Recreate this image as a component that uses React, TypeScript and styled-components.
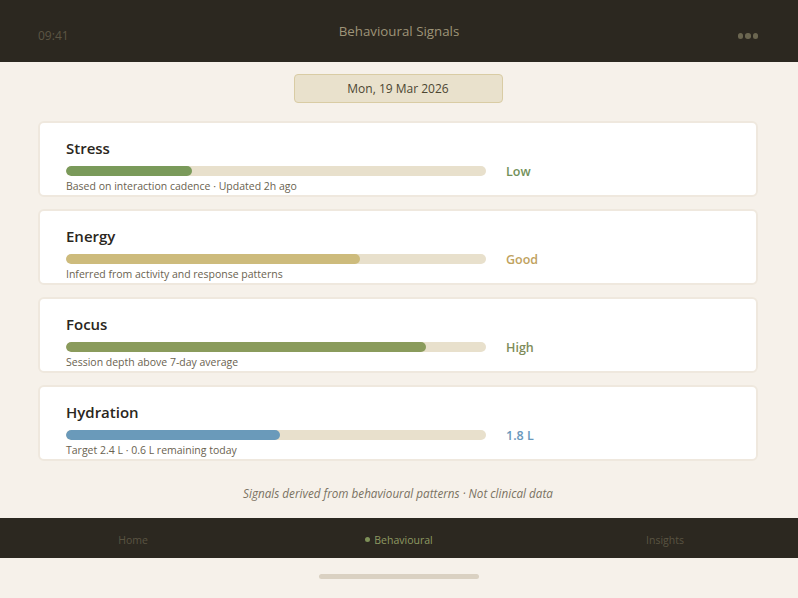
import React from "react";
import styled, { createGlobalStyle } from "styled-components";

const GlobalStyle = createGlobalStyle`
  html, body {
    margin: 0;
    padding: 0;
    background: #f6f1ea;
  }
  body {
    font-family: "Open Sans", "Noto Sans", "Liberation Sans", sans-serif;
  }
`;

const Screen = styled.div`
  width: 798px;
  height: 598px;
  display: flex;
  flex-direction: column;
  background: #f6f1ea;
`;

const TopBar = styled.div`
  height: 62px;
  background: #2c2820;
  display: grid;
  grid-template-columns: 1fr auto 1fr;
  align-items: center;
  padding: 0 38px;
  box-sizing: border-box;
`;

const Clock = styled.span`
  font-size: 12px;
  color: #5c5644;
  padding-top: 8px;
`;

const Title = styled.span`
  font-size: 13.3px;
  color: #9e9478;
`;

const MoreDots = styled.div`
  justify-self: end;
  display: flex;
  gap: 2px;
  padding-top: 10px;
  margin-right: 2px;
`;

const Dot = styled.span<{ $size?: number; $color?: string }>`
  width: ${(p) => p.$size ?? 6}px;
  height: ${(p) => p.$size ?? 6}px;
  border-radius: 50%;
  background: ${(p) => p.$color ?? "#6b6650"};
  display: inline-block;
`;

const Body = styled.main`
  flex: 1;
  display: flex;
  flex-direction: column;
  align-items: center;
  padding: 11px 40px 0 38px;
`;

const DatePill = styled.div`
  width: 209px;
  height: 29px;
  margin-top: 1px;
  box-sizing: border-box;
  background: #e9e1cc;
  border: 1px solid #d9cca4;
  border-radius: 4px;
  display: flex;
  align-items: center;
  justify-content: center;
  font-size: 12px;
  color: #4c4632;
`;

const CardList = styled.div`
  align-self: stretch;
  display: flex;
  flex-direction: column;
  gap: 12px;
  margin-top: 18px;
`;

const Card = styled.section`
  height: 76px;
  box-sizing: border-box;
  background: #ffffff;
  border: 2px solid #efe8de;
  border-radius: 6px;
  padding: 14px 26px 0;
`;

const CardTitle = styled.h3`
  margin: 0;
  font-size: 15px;
  font-weight: 600;
  color: #2a2620;
  line-height: 22px;
`;

const MeterRow = styled.div`
  display: flex;
  align-items: center;
  gap: 20px;
  margin-top: 7px;
  height: 10px;
`;

const Track = styled.div`
  width: 420px;
  height: 10px;
  border-radius: 5px;
  background: #e8e0cc;
  overflow: hidden;
`;

const Fill = styled.div<{ $color: string }>`
  height: 100%;
  border-radius: 5px;
  background: ${(p) => p.$color};
`;

const Reading = styled.span<{ $color: string }>`
  font-size: 12.5px;
  font-weight: 600;
  line-height: 10px;
  padding-top: 1px;
  color: ${(p) => p.$color};
`;

const Caption = styled.p`
  margin: 3px 0 0;
  font-size: 10.5px;
  color: #6a6250;
  line-height: 15px;
`;

const Disclaimer = styled.p`
  margin: 24px 0 0;
  font-size: 11.7px;
  font-style: italic;
  color: #7a7262;
`;

const TabBar = styled.nav`
  height: 40px;
  background: #2c2820;
  display: grid;
  grid-template-columns: repeat(3, 1fr);
  align-items: center;
  margin-top: 16px;
`;

const Tab = styled.span<{ $active?: boolean }>`
  font-size: 10.5px;
  text-align: center;
  padding-top: 3px;
  color: ${(p) => (p.$active ? "#8e9a62" : "#5a5442")};
  display: flex;
  align-items: center;
  justify-content: center;
  gap: 4px;
`;

const HomeArea = styled.div`
  height: 40px;
  display: flex;
  justify-content: center;
  padding-top: 16px;
  box-sizing: border-box;
`;

const HomeIndicator = styled.div`
  width: 160px;
  height: 5px;
  border-radius: 3px;
  background: #dad1c2;
`;

type Signal = {
  name: string;
  fill: number;
  color: string;
  reading: string;
  readingColor: string;
  caption: string;
};

const signals: Signal[] = [
  {
    name: "Stress",
    fill: 126,
    color: "#7a9a5a",
    reading: "Low",
    readingColor: "#72905a",
    caption: "Based on interaction cadence · Updated 2h ago",
  },
  {
    name: "Energy",
    fill: 294,
    color: "#cdbb7c",
    reading: "Good",
    readingColor: "#c0a25e",
    caption: "Inferred from activity and response patterns",
  },
  {
    name: "Focus",
    fill: 360,
    color: "#8a9b5c",
    reading: "High",
    readingColor: "#7e8c5a",
    caption: "Session depth above 7-day average",
  },
  {
    name: "Hydration",
    fill: 214,
    color: "#6a9aba",
    reading: "1.8 L",
    readingColor: "#6a98bc",
    caption: "Target 2.4 L · 0.6 L remaining today",
  },
];

export default function App() {
  return (
    <Screen>
      <GlobalStyle />
      <TopBar>
        <Clock>09:41</Clock>
        <Title>Behavioural Signals</Title>
        <MoreDots>
          <Dot $size={5.5} />
          <Dot $size={5.5} />
          <Dot $size={5.5} />
        </MoreDots>
      </TopBar>
      <Body>
        <DatePill>Mon, 19 Mar 2026</DatePill>
        <CardList>
          {signals.map((s) => (
            <Card key={s.name}>
              <CardTitle>{s.name}</CardTitle>
              <MeterRow>
                <Track>
                  <Fill $color={s.color} style={{ width: s.fill }} />
                </Track>
                <Reading $color={s.readingColor}>{s.reading}</Reading>
              </MeterRow>
              <Caption>{s.caption}</Caption>
            </Card>
          ))}
        </CardList>
        <Disclaimer>Signals derived from behavioural patterns · Not clinical data</Disclaimer>
      </Body>
      <TabBar>
        <Tab>Home</Tab>
        <Tab $active>
          <Dot $size={5} $color="#7e9058" />
          Behavioural
        </Tab>
        <Tab>Insights</Tab>
      </TabBar>
      <HomeArea>
        <HomeIndicator />
      </HomeArea>
    </Screen>
  );
}
